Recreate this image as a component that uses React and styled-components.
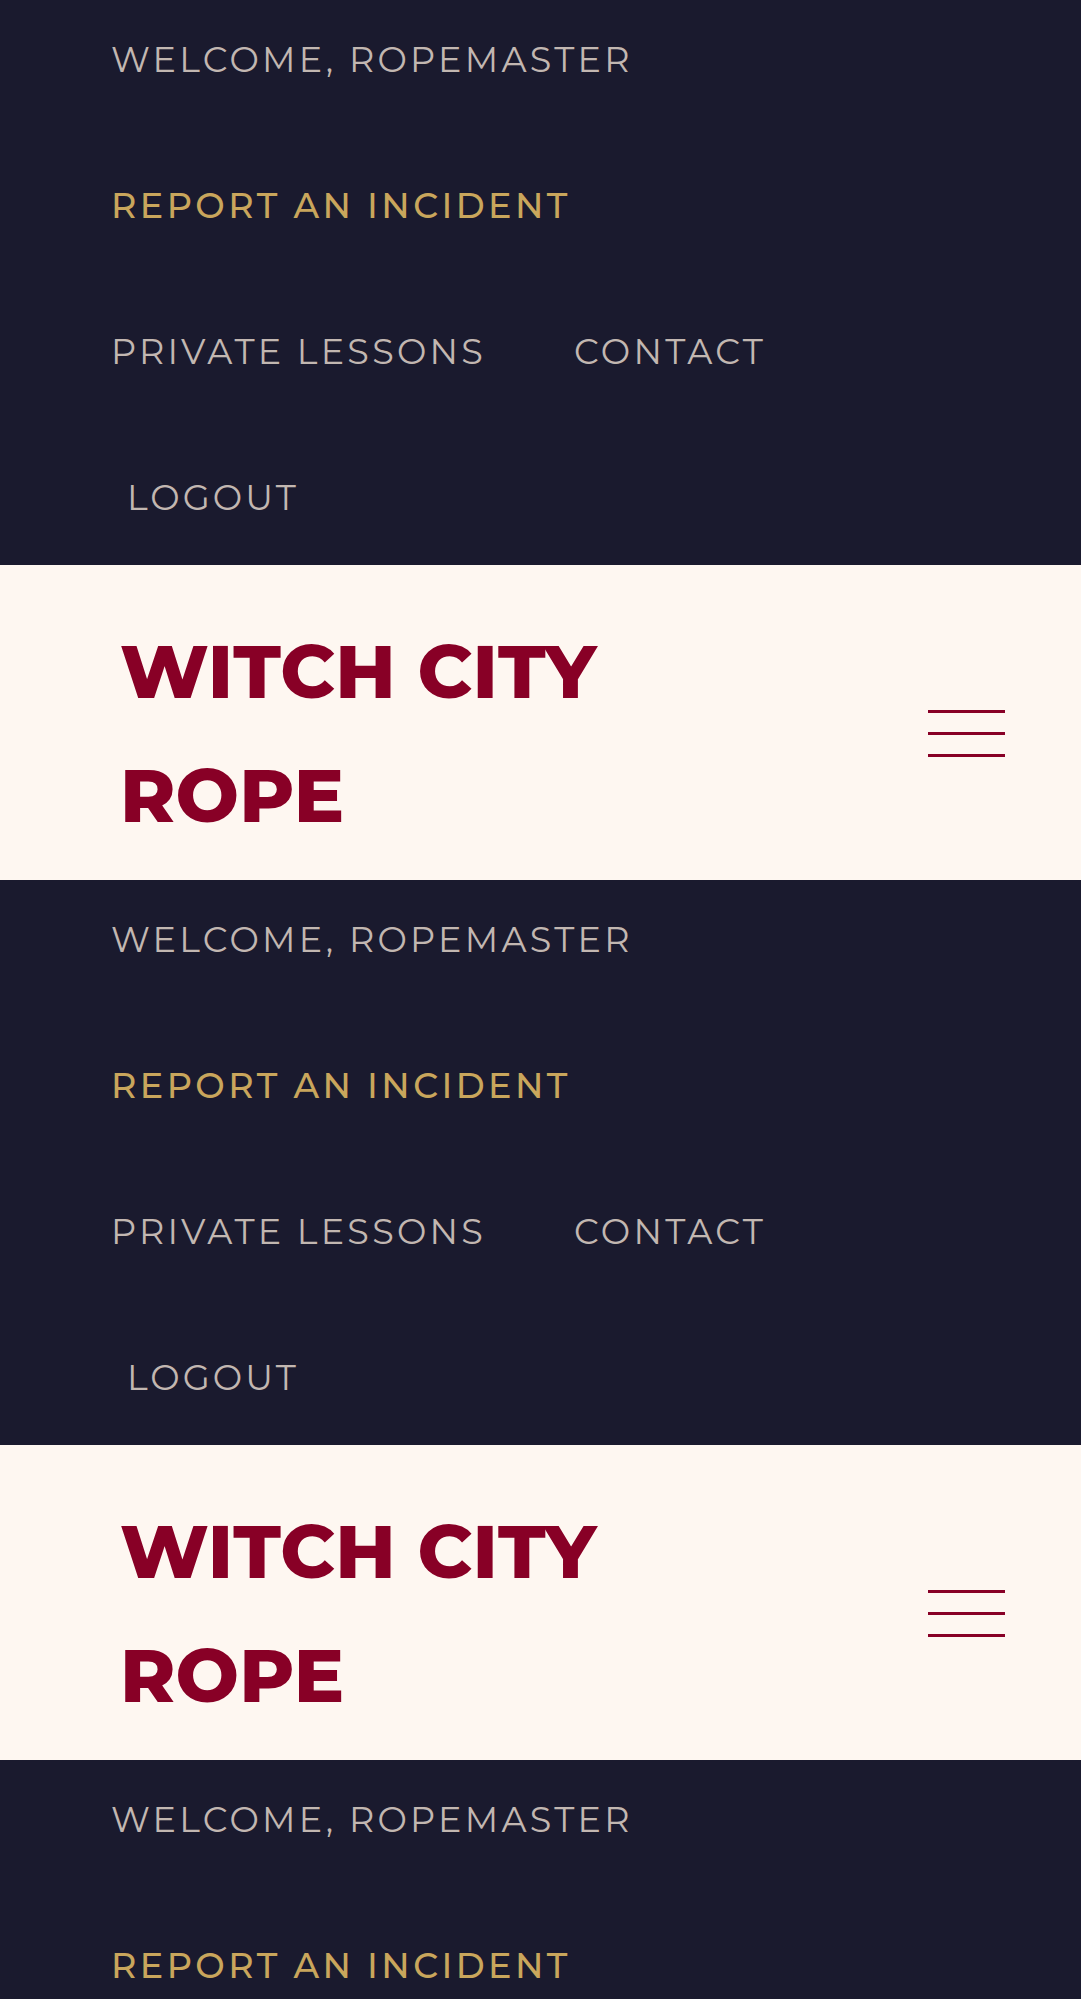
import styled, { createGlobalStyle } from "styled-components";

const GlobalStyle = createGlobalStyle`
  body {
    margin: 0;
    background: #1a1a2e;
    font-family: "Montserrat", "DejaVu Sans", sans-serif;
  }
`;

const TopBar = styled.nav`
  background: #1a1a2e;
  display: flex;
  flex-wrap: wrap;
  column-gap: 88px;
  row-gap: 110px;
  padding: 42px 111px 50px 111px;
  height: 565px;
  box-sizing: border-box;
  align-content: flex-start;
`;

const NavItem = styled.a`
  display: block;
  font-size: 35px;
  line-height: 36px;
  font-weight: ${(p) => (p.$accent ? 500 : 400)};
  letter-spacing: ${(p) => (p.$accent ? "3.4px" : "3.25px")};
  text-transform: uppercase;
  text-decoration: none;
  white-space: nowrap;
  color: ${(p) => (p.$accent ? "#c9a65c" : "#c2b7b1")};
`;

const LogoutButton = styled.button`
  display: block;
  padding: 0 0 0 16px;
  margin: 0;
  border: none;
  background: transparent;
  font-family: inherit;
  font-size: 35px;
  line-height: 36px;
  letter-spacing: 3.1px;
  color: #c2b7b1;
  cursor: pointer;
`;

const Header = styled.header`
  background: #fef7f1;
  height: 315px;
  box-sizing: border-box;
  padding: 44px 76px 23px 120px;
  display: flex;
  align-items: center;
  justify-content: space-between;
`;

const Logo = styled.h1`
  margin: 0;
  width: 540px;
  font-size: 75px;
  line-height: 124px;
  font-weight: 800;
  letter-spacing: 0.1px;
  color: #880026;
`;

const Burger = styled.button`
  display: flex;
  flex-direction: column;
  gap: 19px;
  padding: 0;
  border: none;
  background: transparent;
  width: 77px;
  cursor: pointer;
`;

const BurgerLine = styled.span`
  display: block;
  height: 3px;
  width: 100%;
  background: #880026;
`;

const Block = () => (
  <>
    <TopBar>
      <NavItem href="#">Welcome, Ropemaster</NavItem>
      <NavItem href="#" $accent>
        Report an Incident
      </NavItem>
      <NavItem href="#">Private Lessons</NavItem>
      <NavItem href="#">Contact</NavItem>
      <LogoutButton>LOGOUT</LogoutButton>
    </TopBar>
    <Header>
      <Logo>WITCH CITY ROPE</Logo>
      <Burger aria-label="menu">
        <BurgerLine />
        <BurgerLine />
        <BurgerLine />
      </Burger>
    </Header>
  </>
);

export default function App() {
  return (
    <>
      <GlobalStyle />
      <Block />
      <Block />
      <Block />
    </>
  );
}
